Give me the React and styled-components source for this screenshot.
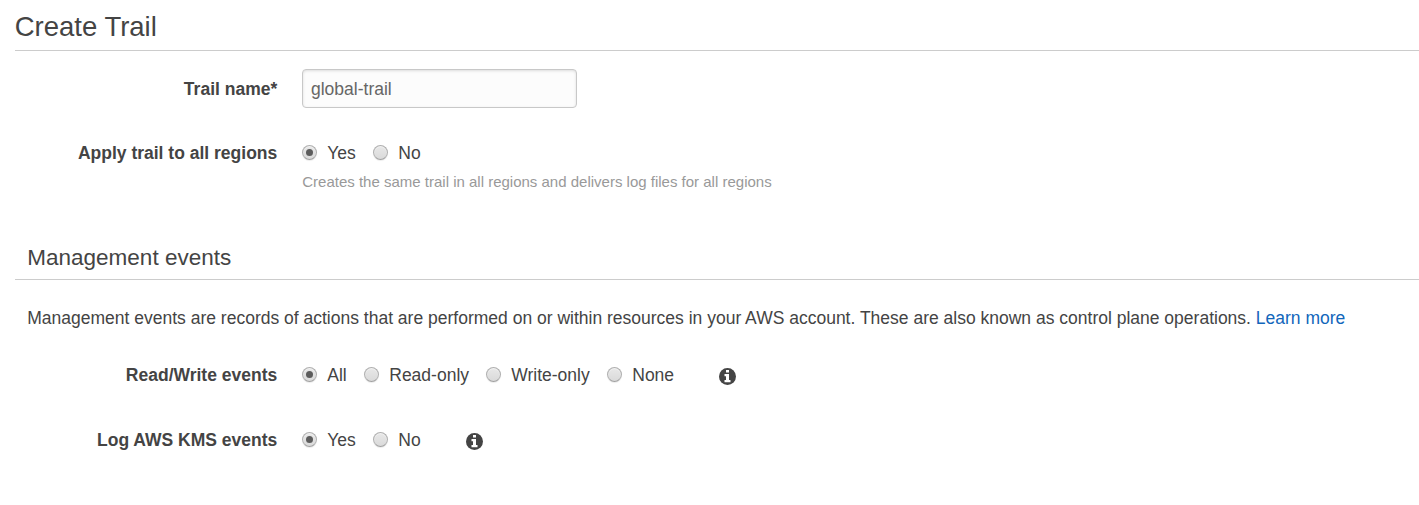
import React from "react";
import styled, { createGlobalStyle } from "styled-components";

const Global = createGlobalStyle`
  * { box-sizing: border-box; }
  body { margin: 0; background: #fff; color: #444; font-family: "Liberation Sans", Arial, sans-serif; font-size: 17.5px; line-height: 20px; overflow: hidden; }
`;
const Page = styled.main`padding-left: 15px; height: 505px;`;
const Title = styled.h1`
  margin: 0; height: 51px; padding-top: 12px; border-bottom: 1px solid #ccc;
  font-size: 27.5px; line-height: 30px; font-weight: 400; text-indent: -0.3px;
`;
const Section = styled.h2`
  margin: 50px 0 0; height: 38px; padding: 3px 0 0 12.3px; border-bottom: 1px solid #ccc;
  font-size: 22.5px; line-height: 26px; font-weight: 400;
`;
const Row = styled.div`
  display: flex; align-items: flex-start; margin-top: ${(p) => p.$top}px; height: ${(p) => p.$height || 20}px;
`;
const Label = styled.div`
  width: 262.25px; margin-right: 24.75px; text-align: right; font-weight: 700; flex: none;
  padding-top: ${(p) => p.$pad || 0}px;
`;
const Input = styled.input`
  width: 275px; height: 39px; padding: 2px 8px 0; border: 1px solid #c8c8c8; border-radius: 4px;
  background: #fcfcfc; color: #666; font: inherit; outline: 0;
  box-shadow: inset 0 1px 3px rgba(0, 0, 0, 0.13);
`;
const Options = styled.div`display: flex; gap: 17px;`;
const Option = styled.label`display: flex; white-space: nowrap; width: ${(p) => p.$width}px;`;
const Radio = styled.span`
  width: 15px; height: 15px; margin: 2px 10.25px 0 0; flex: none; border: 1px solid #b0b0b0; border-bottom-color: #a0a0a0; border-radius: 50%;
  display: flex; align-items: center; justify-content: center;
  background: linear-gradient(#e8e8e8, #dadada);
  box-shadow: inset 0 1px 1px rgba(255, 255, 255, 0.5), 0 1px 1px rgba(0, 0, 0, 0.08);
  &::after { content: ""; width: 7px; height: 7px; border-radius: 50%; background: ${(p) => (p.$on ? "#5c5c5c" : "transparent")}; }
`;
const Hint = styled.p`margin: 9px 0 0 287.25px; font-size: 15px; line-height: 20px; color: #999;`;
const Text = styled.p`margin: 28px 0 0 12.25px; white-space: nowrap;`;
const Link = styled.a`color: #1166bb; text-decoration: none;`;
const Info = styled.svg`width: 17px; height: 17px; margin: 3px 0 0 45px; flex: none;`;

const InfoIcon = () => (
  <Info viewBox="0 0 17 17">
    <circle cx="8.5" cy="8.5" r="8.5" fill="#444" />
    <path d="M7 2h3v2.4H7zM5.5 6H10v6h1.5v2.3h-6V12H7V8.2H5.5z" fill="#fff" />
  </Info>
);
const Choices = ({ items }) => (
  <Options>
    {items.map(([text, width], i) => (
      <Option key={text} $width={width}><Radio $on={i === 0} />{text}</Option>
    ))}
  </Options>
);

export default function App() {
  return (
    <Page>
      <Global />
      <Title>Create Trail</Title>
      <Row $top={18} $height={39}><Label $pad={10}>Trail name*</Label><Input defaultValue="global-trail" /></Row>
      <Row $top={35}><Label>Apply trail to all regions</Label><Choices items={[["Yes", 54], ["No", 48]]} /></Row>
      <Hint>Creates the same trail in all regions and delivers log files for all regions</Hint>
      <Section>Management events</Section>
      <Text>Management events are records of actions that are performed on or within resources in your AWS account. These are also known as control plane operations. <Link>Learn more</Link></Text>
      <Row $top={37}><Label>Read/Write events</Label><Choices items={[["All", 45], ["Read-only", 105], ["Write-only", 104], ["None", 67]]} /><InfoIcon /></Row>
      <Row $top={45}><Label>Log AWS KMS events</Label><Choices items={[["Yes", 54], ["No", 48]]} /><InfoIcon /></Row>
    </Page>
  );
}
